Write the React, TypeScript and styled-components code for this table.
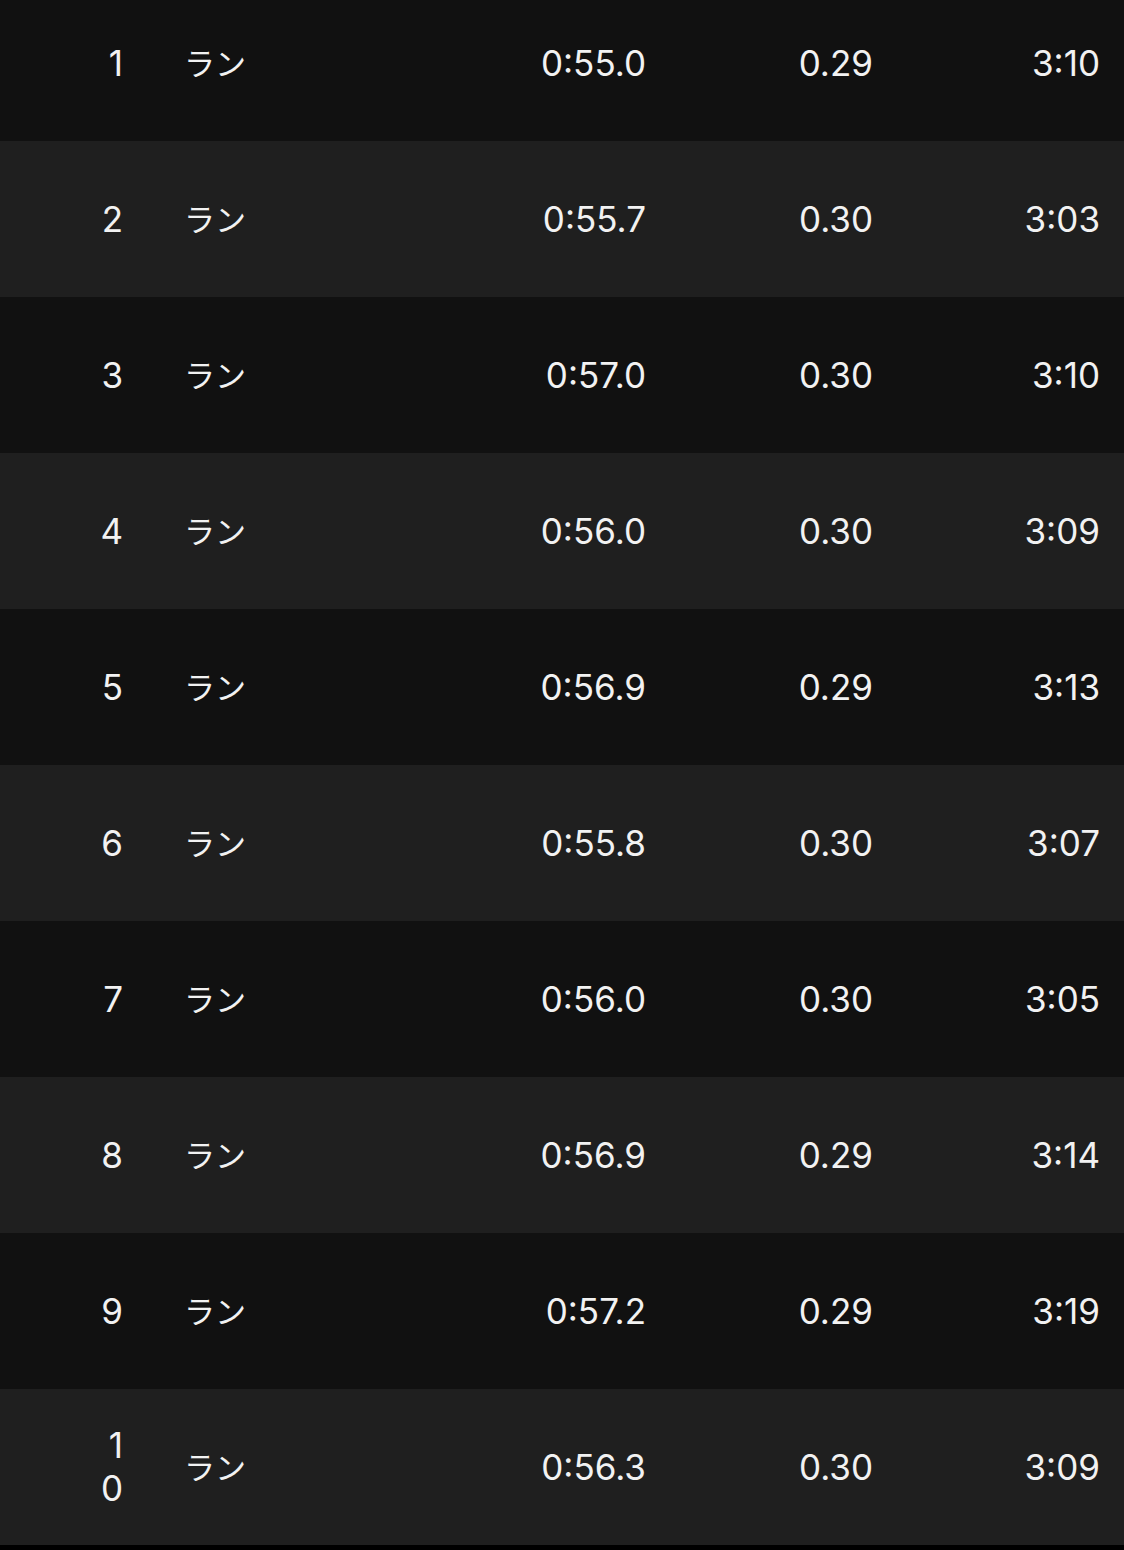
import styled, { createGlobalStyle } from 'styled-components';

const GlobalStyle = createGlobalStyle`
  html, body {
    margin: 0;
    padding: 0;
    background: #000000;
  }
`;

const laps = [
  { no: '1', time: '0:55.0', dist: '0.29', pace: '3:10' },
  { no: '2', time: '0:55.7', dist: '0.30', pace: '3:03' },
  { no: '3', time: '0:57.0', dist: '0.30', pace: '3:10' },
  { no: '4', time: '0:56.0', dist: '0.30', pace: '3:09' },
  { no: '5', time: '0:56.9', dist: '0.29', pace: '3:13' },
  { no: '6', time: '0:55.8', dist: '0.30', pace: '3:07' },
  { no: '7', time: '0:56.0', dist: '0.30', pace: '3:05' },
  { no: '8', time: '0:56.9', dist: '0.29', pace: '3:14' },
  { no: '9', time: '0:57.2', dist: '0.29', pace: '3:19' },
  { no: '10', time: '0:56.3', dist: '0.30', pace: '3:09' },
];

const App = () => {
  return (
    <>
      <GlobalStyle />
      <LapList>
        {laps.map((lap, i) => (
          <LapRow key={lap.no} striped={i % 2 === 1}>
            <LapNo>{lap.no}</LapNo>
            <LapType>ラン</LapType>
            <Value>{lap.time}</Value>
            <Value>{lap.dist}</Value>
            <Value>{lap.pace}</Value>
          </LapRow>
        ))}
      </LapList>
    </>
  );
};

const LapList = styled.div`
  width: 100%;
  margin-top: -15px;
  padding-bottom: 5px;
  display: flex;
  flex-direction: column;
  background: #000000;
  font-family: Inter, 'Noto Sans CJK JP', sans-serif;
  font-size: 35px;
  color: #f2f2f2;
`;

const LapRow = styled.div<{ striped: boolean }>`
  height: 156px;
  padding: 0 24px 0 88px;
  display: grid;
  grid-template-columns: 35px 1fr 200px 227px 227px;
  align-items: center;
  background: ${({ striped }) => (striped ? '#1f1f1f' : '#111111')};
  box-sizing: border-box;
`;

const LapNo = styled.div`
  text-align: right;
  line-height: 43px;
  word-break: break-all;
`;

const LapType = styled.div`
  padding-left: 61px;
  padding-bottom: 4px;
  font-family: 'Noto Sans CJK JP', sans-serif;
  font-size: 31px;
`;

const Value = styled.div`
  text-align: right;
`;

export default App;
